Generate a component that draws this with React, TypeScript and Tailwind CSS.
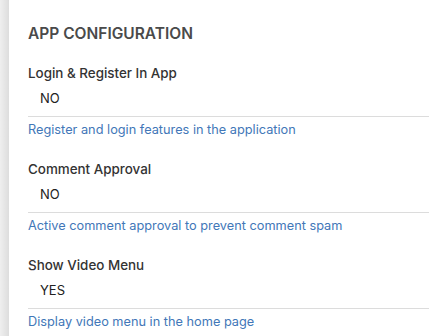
const settings = [
  {
    label: "Login & Register In App",
    value: "NO",
    help: "Register and login features in the application",
  },
  {
    label: "Comment Approval",
    value: "NO",
    help: "Active comment approval to prevent comment spam",
  },
  {
    label: "Show Video Menu",
    value: "YES",
    help: "Display video menu in the home page",
  },
];

export default function App() {
  return (
    <div
      className="flex h-[336px] w-[429px] overflow-hidden bg-white"
      style={{ fontFamily: 'Inter, "Open Sans", "Liberation Sans", sans-serif' }}
    >
      <div className="w-[9px] shrink-0 bg-gradient-to-r from-[#efefef] to-[#dddddd]" />

      <section className="flex-1 pl-[19px] pt-[22px]">
        <h2 className="text-[15.5px] font-semibold leading-[24px] text-[#4a4a4a]">
          APP CONFIGURATION
        </h2>

        <div className="mt-[18px]">
          {settings.map((setting) => (
            <div key={setting.label} className="mb-[21px]">
              <p className="text-[13.4px] font-medium leading-[18px] text-[#333]">
                {setting.label}
              </p>
              <p className="mt-[7px] pl-[12px] text-[13px] leading-[18px] text-[#222]">
                {setting.value}
              </p>
              <div className="mt-[9px] border-t border-[#dcdcdc]" />
              <p className="mt-[4px] text-[12.75px] leading-[18px] text-[#4277b8]">
                {setting.help}
              </p>
            </div>
          ))}
        </div>
      </section>
    </div>
  );
}
